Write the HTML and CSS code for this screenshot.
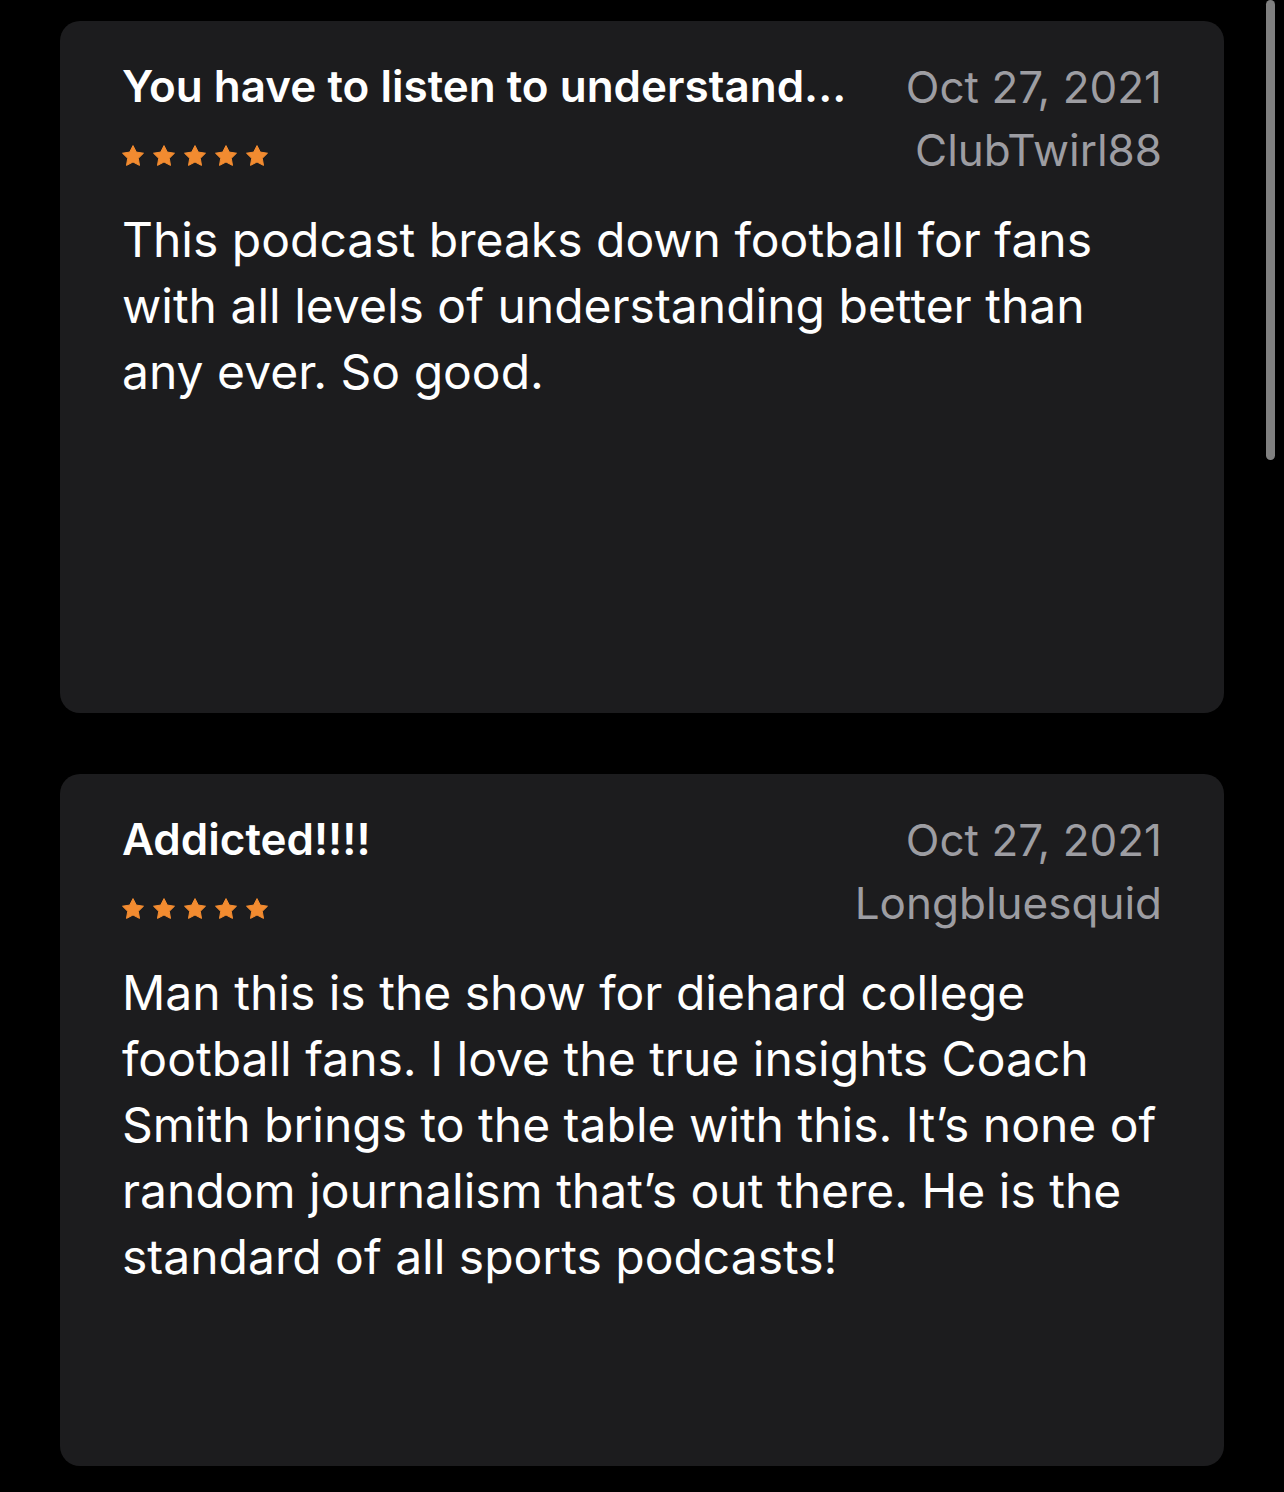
FILE: index.html
```html
<!DOCTYPE html>
<html>
<head>
<meta charset="utf-8">
<link rel="stylesheet" href="styles.css">
</head>
<body>
<div class="list">
  <section class="card">
    <div class="head">
      <div class="left">
        <div class="title">You have to listen to understand...</div>
        <div class="stars">
          <svg viewBox="0 0 24 24"><path d="M12 1.6L15.3 8.1 22.5 9.2 17.3 14.3 18.5 21.4 12 18 5.5 21.4 6.7 14.3 1.5 9.2 8.7 8.1z"/></svg>
          <svg viewBox="0 0 24 24"><path d="M12 1.6L15.3 8.1 22.5 9.2 17.3 14.3 18.5 21.4 12 18 5.5 21.4 6.7 14.3 1.5 9.2 8.7 8.1z"/></svg>
          <svg viewBox="0 0 24 24"><path d="M12 1.6L15.3 8.1 22.5 9.2 17.3 14.3 18.5 21.4 12 18 5.5 21.4 6.7 14.3 1.5 9.2 8.7 8.1z"/></svg>
          <svg viewBox="0 0 24 24"><path d="M12 1.6L15.3 8.1 22.5 9.2 17.3 14.3 18.5 21.4 12 18 5.5 21.4 6.7 14.3 1.5 9.2 8.7 8.1z"/></svg>
          <svg viewBox="0 0 24 24"><path d="M12 1.6L15.3 8.1 22.5 9.2 17.3 14.3 18.5 21.4 12 18 5.5 21.4 6.7 14.3 1.5 9.2 8.7 8.1z"/></svg>
        </div>
      </div>
      <div class="right">
        <div class="date">Oct 27, 2021</div>
        <div class="author">ClubTwirl88</div>
      </div>
    </div>
    <p class="body">This podcast breaks down football for fans with all levels of understanding better than any ever. So good.</p>
  </section>
  <section class="card">
    <div class="head">
      <div class="left">
        <div class="title">Addicted!!!!</div>
        <div class="stars">
          <svg viewBox="0 0 24 24"><path d="M12 1.6L15.3 8.1 22.5 9.2 17.3 14.3 18.5 21.4 12 18 5.5 21.4 6.7 14.3 1.5 9.2 8.7 8.1z"/></svg>
          <svg viewBox="0 0 24 24"><path d="M12 1.6L15.3 8.1 22.5 9.2 17.3 14.3 18.5 21.4 12 18 5.5 21.4 6.7 14.3 1.5 9.2 8.7 8.1z"/></svg>
          <svg viewBox="0 0 24 24"><path d="M12 1.6L15.3 8.1 22.5 9.2 17.3 14.3 18.5 21.4 12 18 5.5 21.4 6.7 14.3 1.5 9.2 8.7 8.1z"/></svg>
          <svg viewBox="0 0 24 24"><path d="M12 1.6L15.3 8.1 22.5 9.2 17.3 14.3 18.5 21.4 12 18 5.5 21.4 6.7 14.3 1.5 9.2 8.7 8.1z"/></svg>
          <svg viewBox="0 0 24 24"><path d="M12 1.6L15.3 8.1 22.5 9.2 17.3 14.3 18.5 21.4 12 18 5.5 21.4 6.7 14.3 1.5 9.2 8.7 8.1z"/></svg>
        </div>
      </div>
      <div class="right">
        <div class="date">Oct 27, 2021</div>
        <div class="author">Longbluesquid</div>
      </div>
    </div>
    <p class="body">Man this is the show for diehard college football fans. I love the true insights Coach Smith brings to the table with this. It’s none of random journalism that’s out there. He is the standard of all sports podcasts!</p>
  </section>
</div>
<div class="scrollbar"></div>
</body>
</html>
```

FILE: styles.css
```css
html, body {
  margin: 0;
  padding: 0;
  background: #000;
  height: 1492px;
  overflow: hidden;
}
body {
  font-family: Inter, "Noto Sans", sans-serif;
  color: #fff;
}
.list {
  display: flex;
  flex-direction: column;
  gap: 61px;
  padding: 21px 0 0 60px;
  width: 1164px;
}
.card {
  background: #1c1c1e;
  border-radius: 20px;
  height: 692px;
  box-sizing: border-box;
  padding: 35px 62px 0 62px;
}
.head {
  display: flex;
  justify-content: space-between;
  align-items: flex-start;
}
.left {
  display: flex;
  flex-direction: column;
}
.title {
  font-weight: 600;
  font-size: 44px;
  line-height: 60px;
}
.stars {
  display: flex;
  gap: 7px;
  margin-top: 28px;
  margin-left: -1px;
}
.stars svg {
  width: 24px;
  height: 24px;
  fill: #f28b30;
  stroke: #f28b30;
  stroke-width: 1;
  stroke-linejoin: round;
}
.right {
  display: flex;
  flex-direction: column;
  align-items: flex-end;
  color: #9d9da2;
  font-size: 44px;
  line-height: 63px;
}
.body {
  margin: 25px 0 0 0;
  font-size: 48px;
  line-height: 66px;
}
.scrollbar {
  position: absolute;
  left: 1266px;
  top: 0;
  width: 9px;
  height: 460px;
  border-radius: 5px;
  background: #808080;
}
```
